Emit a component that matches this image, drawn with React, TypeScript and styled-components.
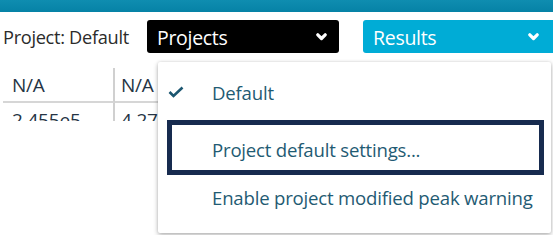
import React from "react";
import styled, { createGlobalStyle } from "styled-components";

const Global = createGlobalStyle`
  html, body { margin: 0; padding: 0; background: #ffffff; overflow: hidden; }
  body { font-family: "Open Sans", "Noto Sans", Arial, sans-serif; width: 553px; height: 235px; }
`;

const Page = styled.div`
  position: relative;
  width: 553px;
  height: 235px;
  overflow: hidden;
`;

const TopBar = styled.div`
  height: 12px;
  background: linear-gradient(#0f8db0, #0682a6);
`;

const Toolbar = styled.div`
  display: flex;
  align-items: center;
  height: 33px;
  margin-top: 8px;
  padding-left: 3px;
`;

const Label = styled.span`
  font-size: 18.2px;
  color: #2b2b2b;
  letter-spacing: -0.3px;
  width: 144px;
  flex: none;
  white-space: nowrap;
`;

const DropButton = styled.div<{ $bg: string; $width?: number }>`
  display: flex;
  align-items: center;
  justify-content: space-between;
  box-sizing: border-box;
  height: 33px;
  ${(p) => (p.$width ? `width: ${p.$width}px; flex: none;` : "flex: 1; margin-right: -4px;")}
  background: ${(p) => p.$bg};
  border-radius: 3px;
  padding: 1px ${(p) => (p.$width ? 12 : 18)}px 0 10px;
  color: #ffffff;
  font-size: 19.5px;
  letter-spacing: -0.3px;
`;

const Spacer = styled.div`
  width: 24px;
  flex: none;
`;

const Table = styled.div`
  margin-top: 15px;
  height: 53px;
  overflow: hidden;
  display: grid;
  grid-template-columns: 112px 200px;
  grid-template-rows: 35px 34px;
  padding-left: 3px;
`;

const Cell = styled.div<{ $first?: boolean; $top?: boolean }>`
  box-sizing: border-box;
  display: flex;
  align-items: center;
  padding-left: ${(p) => (p.$first ? 9 : 6)}px;
  font-size: 19px;
  letter-spacing: -0.2px;
  color: #253444;
  border-right: ${(p) => (p.$first ? "2px solid #d0d0d0" : "none")};
  border-bottom: ${(p) => (p.$top ? "2px solid #d6d6d6" : "none")};
  white-space: nowrap;
`;

const Menu = styled.div`
  position: absolute;
  left: 158px;
  top: 62px;
  width: 393px;
  height: 171px;
  box-sizing: border-box;
  background: #ffffff;
  border-radius: 2px;
  box-shadow: 0 2px 5px rgba(0, 0, 0, 0.28), 0 0 3px rgba(0, 0, 0, 0.12);
  padding: 8px 7px 10px 9px;
  display: flex;
  flex-direction: column;
`;

const Item = styled.div<{ $h: number; $focused?: boolean; $shift?: number }>`
  box-sizing: border-box;
  height: ${(p) => p.$h}px;
  border: 5px solid ${(p) => (p.$focused ? "#172b4f" : "transparent")};
  display: flex;
  align-items: center;
  padding-top: ${(p) => Math.max(0, p.$shift ?? 0)}px;
  padding-bottom: ${(p) => Math.max(0, -(p.$shift ?? 0))}px;
  font-size: 18.6px;
  color: #1f5b73;
  letter-spacing: -0.2px;
  white-space: nowrap;
`;

const CheckCol = styled.div`
  width: 40px;
  display: flex;
  align-items: center;
  margin-left: -4px;
  margin-right: 4px;
`;

const Chevron = () => (
  <svg width="11" height="8" viewBox="0 0 11 8">
    <path d="M1.8 1.8 L5.5 5.5 L9.2 1.8" fill="none" stroke="#ffffff" strokeWidth="3.2" strokeLinecap="round" strokeLinejoin="round" />
  </svg>
);

const Check = () => (
  <svg width="16" height="12" viewBox="0 0 16 12">
    <path d="M1.5 6 L5.5 10 L14.5 1.5" fill="none" stroke="#1b5670" strokeWidth="2.6" strokeLinejoin="miter" />
  </svg>
);

export default function App() {
  return (
    <Page>
      <Global />
      <TopBar />
      <Toolbar>
        <Label>Project: Default</Label>
        <DropButton $bg="#000000" $width={192}>
          <span>Projects</span>
          <Chevron />
        </DropButton>
        <Spacer />
        <DropButton $bg="#00acd6">
          <span>Results</span>
          <Chevron />
        </DropButton>
      </Toolbar>
      <Table>
        <Cell $first $top>N/A</Cell>
        <Cell $top>N/A</Cell>
        <Cell $first>2.455e5</Cell>
        <Cell>4.27e5</Cell>
      </Table>
      <Menu>
        <Item $h={50} $shift={-6}>
          <CheckCol>
            <Check />
          </CheckCol>
          Default
        </Item>
        <Item $h={55} $focused $shift={3}>
          <CheckCol />
          Project default settings...
        </Item>
        <Item $h={48} $shift={-3}>
          <CheckCol />
          Enable project modified peak warning
        </Item>
      </Menu>
    </Page>
  );
}
